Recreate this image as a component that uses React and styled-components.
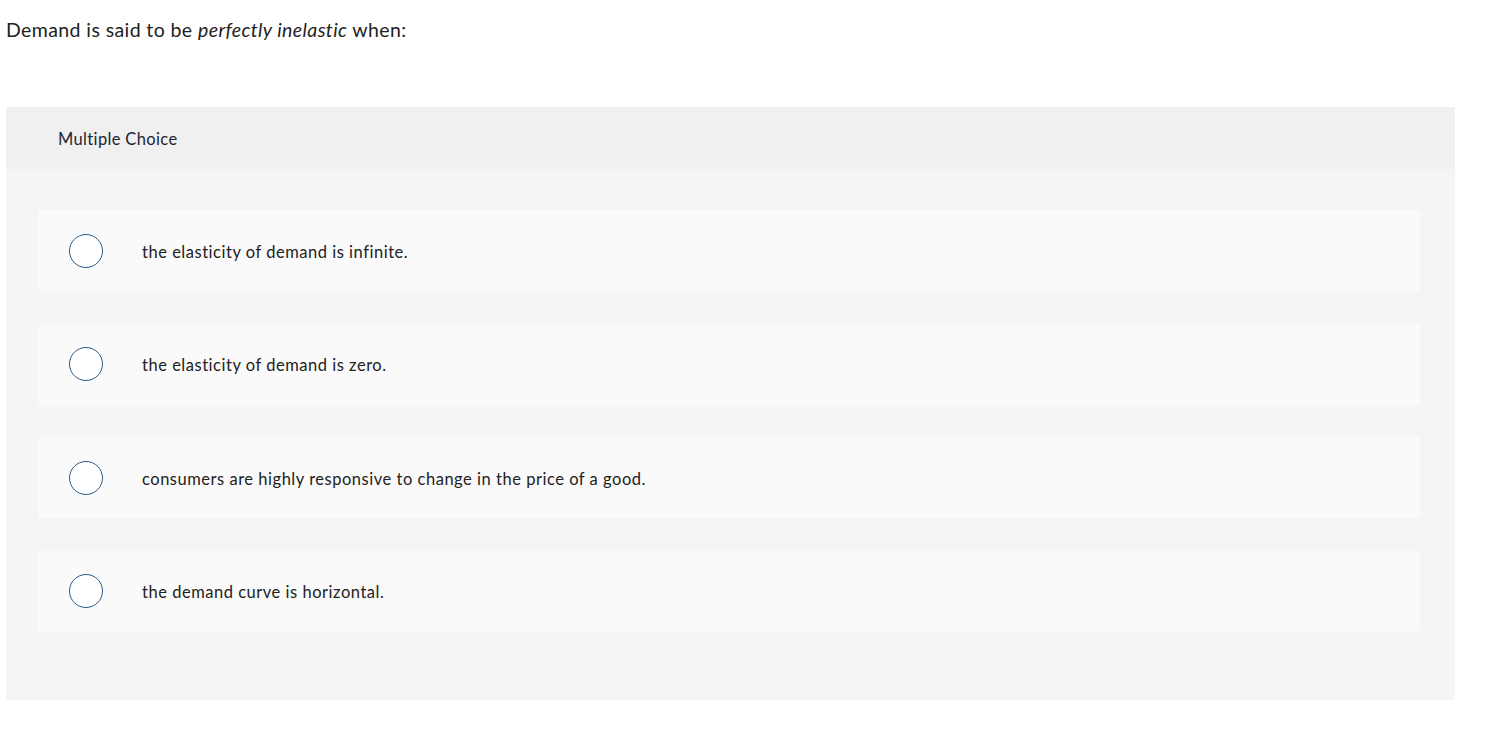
import React from "react";
import styled, { createGlobalStyle } from "styled-components";

const Global = createGlobalStyle`
  html, body { margin: 0; padding: 0; background: #fff; }
  body { font-family: Lato, "Open Sans", Arial, sans-serif; color: #222; }
`;

const Page = styled.div`
  padding: 16px 41px 0 6px;
`;

const Question = styled.p`
  margin: 0;
  font-size: 19.5px;
  letter-spacing: 0.4px;
  line-height: 28px;
  color: #222;
  em { font-style: italic; }
`;

const Card = styled.div`
  margin-top: 63px;
  background: #f5f5f5;
  border-radius: 3px;
  overflow: hidden;
`;

const Header = styled.div`
  height: 62px;
  background: #f0f0f0;
  display: flex;
  align-items: center;
  padding-left: 52px;
  padding-top: 2px;
  box-sizing: border-box;
  font-size: 16.5px;
  letter-spacing: 0.35px;
  color: #1f2533;
`;

const Options = styled.div`
  display: flex;
  flex-direction: column;
  gap: 32.5px;
  padding: 41px 35px 68px 32px;
`;

const Option = styled.label`
  height: 81px;
  background: #fafafa;
  border-radius: 3px;
  display: flex;
  align-items: center;
  padding-left: 31px;
  cursor: pointer;
`;

const Radio = styled.span`
  width: 32px;
  height: 32px;
  border: 1.6px solid #2b5b8a;
  border-radius: 50%;
  background: #fff;
  flex: none;
`;

const OptionText = styled.span`
  margin-left: 39px;
  padding-top: 2px;
  font-size: 16.5px;
  letter-spacing: 0.52px;
  color: #222;
`;

const choices = [
  "the elasticity of demand is infinite.",
  "the elasticity of demand is zero.",
  "consumers are highly responsive to change in the price of a good.",
  "the demand curve is horizontal.",
];

export default function App() {
  return (
    <>
      <Global />
      <Page>
        <Question>
          Demand is said to be <em>perfectly inelastic</em> when:
        </Question>
        <Card>
          <Header>Multiple Choice</Header>
          <Options>
            {choices.map((c) => (
              <Option key={c}>
                <Radio />
                <OptionText>{c}</OptionText>
              </Option>
            ))}
          </Options>
        </Card>
      </Page>
    </>
  );
}
